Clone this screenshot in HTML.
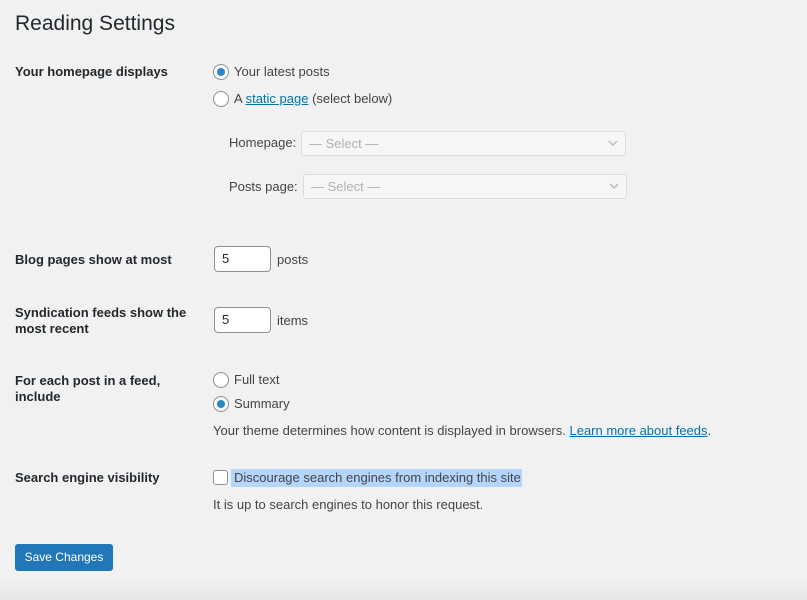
<!DOCTYPE html>
<html><head><meta charset="utf-8"><style>
body{margin:0;width:807px;height:600px;background:#f1f1f1;font-family:"Liberation Sans",sans-serif;font-size:13px;color:#444;position:relative;overflow:hidden}
.a{position:absolute;white-space:nowrap;line-height:16px}
h1{position:absolute;left:15px;top:10px;margin:0;font-size:21px;font-weight:400;color:#23282d;line-height:28px}
.l{font-weight:bold;color:#23282d}
.r{position:absolute;width:14px;height:14px;border:1px solid #8c8f94;border-radius:50%;background:#fff;box-sizing:content-box}
.r.on::after{content:"";position:absolute;left:3px;top:3px;width:8px;height:8px;border-radius:50%;background:#2a86c7}
.sel{position:absolute;height:25px;border:1px solid #dcdcde;border-radius:3px;background:#f6f6f6;color:#b0b0b0;box-sizing:border-box;padding-left:7px;line-height:24px}
.sel svg{position:absolute;right:7px;top:8px}
.in{position:absolute;width:57px;height:26px;border:1px solid #8c8f94;border-radius:4px;background:#fff;box-sizing:border-box;padding-left:7px;line-height:24px;color:#23282d}
a{color:#0073aa;text-decoration:underline}
</style></head><body>
<h1>Reading Settings</h1>
<div class="a l" style="left:15px;top:64px">Your homepage displays</div>
<div class="r on" style="left:213px;top:64px"></div>
<div class="a" style="left:234px;top:64px">Your latest posts</div>
<div class="r" style="left:213px;top:91px"></div>
<div class="a" style="left:234px;top:91px">A <a>static page</a> (select below)</div>
<div class="a" style="left:229px;top:135px">Homepage:</div>
<div class="sel" style="left:301px;top:131px;width:325px">— Select —<svg width="10" height="7" viewBox="0 0 10 7"><path d="M1 1l4 4 4-4" stroke="#bbb" stroke-width="1.5" fill="none"/></svg></div>
<div class="a" style="left:229px;top:179px">Posts page:</div>
<div class="sel" style="left:303px;top:174px;width:324px">— Select —<svg width="10" height="7" viewBox="0 0 10 7"><path d="M1 1l4 4 4-4" stroke="#bbb" stroke-width="1.5" fill="none"/></svg></div>

<div class="a l" style="left:15px;top:252px">Blog pages show at most</div>
<div class="in" style="left:214px;top:246px">5</div>
<div class="a" style="left:277px;top:252px">posts</div>

<div class="a l" style="left:15px;top:305px">Syndication feeds show the</div>
<div class="a l" style="left:15px;top:321px">most recent</div>
<div class="in" style="left:214px;top:307px">5</div>
<div class="a" style="left:277px;top:313px">items</div>

<div class="a l" style="left:15px;top:373px">For each post in a feed,</div>
<div class="a l" style="left:15px;top:389px">include</div>
<div class="r" style="left:213px;top:372px"></div>
<div class="a" style="left:234px;top:372px">Full text</div>
<div class="r on" style="left:213px;top:396px"></div>
<div class="a" style="left:234px;top:396px">Summary</div>
<div class="a" style="left:213px;top:423px">Your theme determines how content is displayed in browsers. <a>Learn more about feeds</a>.</div>

<div class="a l" style="left:15px;top:470px">Search engine visibility</div>
<div style="position:absolute;left:213px;top:470px;width:13px;height:13px;border:1px solid #8c8f94;border-radius:3px;background:#fff"></div>
<div class="a" style="left:231px;top:469px;background:#b4d5fe;padding:1px 1px 1px 3px">Discourage search engines from indexing this site</div>
<div class="a" style="left:213px;top:497px">It is up to search engines to honor this request.</div>

<div style="position:absolute;left:15px;top:544px;width:98px;height:27px;background:#2177b8;border-radius:3px;color:#fff;font-size:12px;line-height:27px;text-align:center">Save Changes</div>
<div style="position:absolute;left:0;top:578px;width:807px;height:22px;background:linear-gradient(#f1f1f1,#e6e6e6)"></div>
</body></html>
